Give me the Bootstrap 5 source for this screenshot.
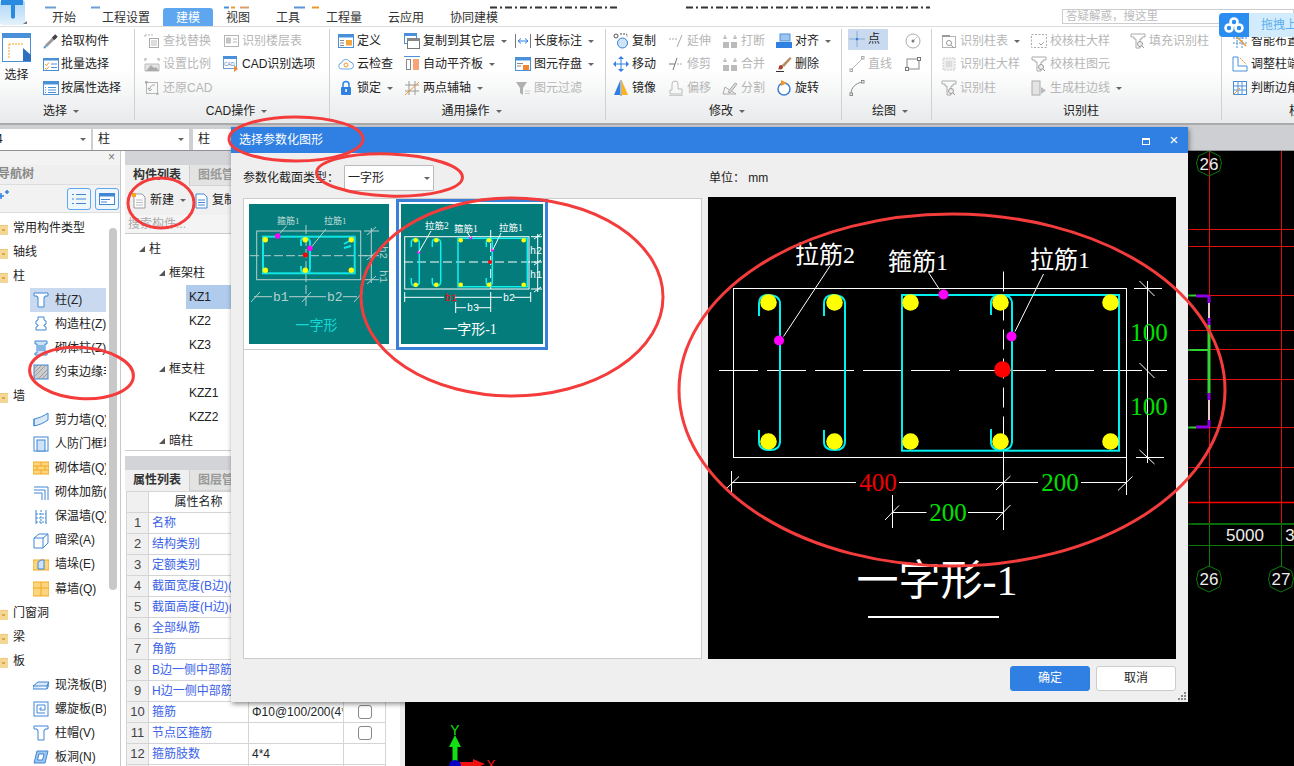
<!DOCTYPE html>
<html lang="zh-CN">
<head>
<meta charset="UTF-8">
<title>选择参数化图形</title>
<link href="https://cdn.jsdelivr.net/npm/bootstrap@5.3.0/dist/css/bootstrap.min.css" rel="stylesheet">
<style>
html, body { margin: 0; width: 1294px; height: 766px; overflow: hidden; background: #fff; }
body { font: 12px/1.2 "Liberation Sans", "Noto Sans CJK SC", sans-serif; color: #222; }
.app-root { position: relative; width: 1294px; height: 766px; overflow: hidden; }

/* header */
.hdr { height: 26px; background: #fff; }
.logo-tile { width: 27px; height: 26px; margin-right: 12px; flex: none; }
.hdr-right { min-width: 0; }
.hdr-marks { height: 4px; }
.tab-row { height: 22px; margin-top: 0; }
.tab-row .nav-link { padding: 4px 13px 0; height: 18px; margin-top: 4px; line-height: 12px; font-size: 12px; color: #333; border-radius: 3px 3px 0 0; }
.tab-row .nav-link.active { background: #5ea6f0; color: #fff; }
.ask-box { position: absolute; left: 1062px; top: 9px; width: 232px; height: 15px; border: 1px solid #ccc; color: #bbb; font-size: 11.5px; line-height: 13px; padding-left: 3px; }
.up-widget { position: absolute; left: 1219px; top: 13px; width: 75px; height: 24px; border-radius: 4px 0 0 4px; background: #d3ecfd; overflow: hidden; color: #5aaeee; line-height: 24px; white-space: nowrap; }
.up-logo { width: 30px; height: 24px; background: #2b8df0; flex: none; margin-right: 12px; }

/* ribbon */
.ribbon { height: 96px; background: linear-gradient(#fff 45%, #e8eaeb); border-top: 1px solid #dcdcdc; border-bottom: 2px solid #a8aaac; box-sizing: content-box; }
.rb-group { position: relative; height: 96px; flex: none; }
.rb-group + .rb-group::before { content: ""; position: absolute; left: 0; top: 2px; bottom: 3px; width: 1px; background: #cfd1d2; }
.rb-body { display: grid; grid-auto-flow: column; grid-template-rows: repeat(3, 23.5px); padding-top: 2px; height: 73px; }
.rb-cap { height: 23px; text-align: center; line-height: 23px; }
.rb-item { display: flex; align-items: center; white-space: nowrap; }
.rb-item.off { color: #b6b6b6; }
.rb-ic { width: 16px; height: 16px; flex: none; margin-right: 3px; }
.dropdown-toggle::after { margin-left: 6px; vertical-align: 2px; color: #666; }
.gp-sel { width: 134px; } .gp-sel .rb-body { grid-template-columns: 43px 1fr; } .gp-sel .rb-cap { padding-right: 12px; }
.gp-sel .rb-ic { margin-right: 2px; }
.rb-big { grid-row: 1 / span 3; display: flex; flex-direction: column; align-items: center; width: 33px; padding-top: 4px; gap: 6px; }
.rb-bigic { width: 29px; height: 29px; }
.gp-cad { width: 195px; padding-left: 10px; } .gp-cad .rb-body { grid-template-columns: 79px 1fr; }
.gp-gen { width: 276px; padding-left: 9px; } .gp-gen .rb-body { grid-template-columns: 66px 111px 1fr; }
.gp-mod { width: 236px; padding-left: 8px; } .gp-mod .rb-body { grid-template-columns: 55px 54px 54px 1fr; }
.gp-drw { width: 90px; padding-left: 8px; } .gp-drw .rb-body { grid-template-columns: 56px 1fr; }
.gp-col { width: 290px; padding-left: 10px; } .gp-col .rb-body { grid-template-columns: 90px 99px 1fr; }
.gp-nxt { width: 73px; padding-left: 11px; overflow: hidden; } .gp-nxt .rb-cap { padding-left: 57px; text-align: left; }
.on-pt { background: #c9daf0; width: 40px; margin: 0 0 3px -1px; padding-left: 1px; }

/* combo bar */
.combo-bar { height: 28px; background: #cdcfd2; border-bottom: 1px solid #8f9194; padding-top: 4px; gap: 2px; }
.combo-cell { height: 21px; background: #fff; padding: 0 5px; line-height: 21px; display: flex; justify-content: space-between; align-items: center; }
.cb-a { width: 91px; overflow: hidden; } .cb-b { width: 96px; margin-right: 2px; } .cb-c { width: 50px; }
.cb-cut { margin-left: -9px; }

/* panels */
.work-row { height: 615px; }
.nav-pane { width: 121px; flex: none; border-right: 1px solid #c9c9c9; overflow: hidden; position: relative; background: #fff; }
.pane-top { height: 14px; background: #f3f3f3; position: relative; }
.close-x { position: absolute; left: 108px; top: 0; color: #777; font-size: 12px; line-height: 13px; }
.nav-title { height: 20px; background: #efefef; color: #888; font-weight: 700; line-height: 19px; border-bottom: 1px solid #ddd; margin-left: -2px; padding-left: 0; }
.nav-tools { height: 28px; background: #f2f2f2; border-bottom: 1px solid #ddd; padding: 3px 1px 0 0; justify-content: space-between; }
.sq-btn { width: 24px; height: 22px; border: 1px solid #5ea6f0; border-radius: 3px; background: #eef6fe; display: flex; align-items: center; justify-content: center; }
.sq-wrap { gap: 4px; }
.tree-box { padding-top: 3px; }
.nt-row { height: 24.05px; display: flex; align-items: center; white-space: nowrap; overflow: hidden; }
.nt-fold { width: 106px; }
.nt-fold svg { margin-left: -8px; margin-right: 5px; width: 16px; height: 14px; flex: none; }
.nt-leaf { margin-left: 30px; width: 76px; }
.nt-leaf svg { width: 16px; height: 16px; margin: 0 6px 0 3px; flex: none; }
.nt-leaf.pick { background: #c9daf0; }
.nav-scroll { position: absolute; left: 109px; top: 77px; width: 8px; height: 362px; background: #c8c8c8; border-radius: 4px; }
.gap-strip { width: 4px; flex: none; background: #fff; }
.gap-strip2 { width: 5px; flex: none; background: #efefef; }
.comp-pane { width: 275px; flex: none; background: #fff; overflow: hidden; }
.grey-strip { height: 14px; background: #d2d4d7; }
.pane-tabs { height: 21px; background: #e3e3e3; border-bottom: 1px solid #d3d3d3; }
.pane-tab { padding: 0 8px; line-height: 20px; height: 21px; }
.pane-tab.now { background: #f0f0f0; font-weight: 700; color: #333; border-right: 1px solid #ccc; width: 65px; }
.pane-tab.idle { color: #999; font-weight: 700; }
.list-tools { height: 29px; background: #f0f0f0; align-items: center; padding-left: 7px; }
.list-tools svg { width: 14px; height: 16px; flex: none; }
.search-in { height: 19px; background: #f4f4f4; color: #aaa; padding-left: 3px; line-height: 18px; border-bottom: 1px solid #ccc; }
.comp-tree { height: 217px; overflow: hidden; padding-top: 3px; border-bottom: 1px solid #ccc; margin-right: 0; }
.ct-row { height: 24px; display: flex; align-items: center; white-space: nowrap; }
.ct-tri { width: 0; height: 0; border-style: solid; border-width: 0 0 6px 6px; border-color: transparent transparent #555; margin-right: 4px; }
.lv1 { padding-left: 14px; } .lv2 { padding-left: 34px; } .lv3 { padding-left: 64px; }
.ct-pick { margin-left: 61px; padding-left: 3px; background: #b0cbeb; }
.gap-v { height: 5px; background: #fff; }
.prop-wrap { width: 259px; margin-left: 1px; }
.prop-table { table-layout: fixed; width: 259px; margin: 0; border-color: #d5d5d5; --bs-table-bg: transparent; }
.c-a { width: 22px; } .c-b { width: 100px; } .c-c { width: 95px; } .c-d { width: 42px; }
.prop-table td, .prop-table th { padding: 0 3px; height: 21px; font-size: 12px; font-weight: 400; line-height: 20px; white-space: nowrap; overflow: hidden; }
.prop-table .idx { background: #f0f0f0; text-align: center; color: #444; padding: 0; font-size: 13px; }
.prop-table .nm { color: #3a62e8; }
.prop-table .ch { text-align: center; padding: 0; }
.prop-table .form-check-input { margin: 3px 0 0; width: 14px; height: 14px; border-color: #888; border-radius: 3px; float: none; }
.cad-view { flex: 1 1 0; background: #000; min-width: 0; }
.cad-view svg { display: block; }

/* dialog */
.param-dlg { position: absolute; left: 231px; top: 127px; width: 957px; height: 575px; background: #efefef; box-shadow: 1px 2px 5px rgba(0, 0, 0, .45); display: flex; flex-direction: column; }
.dlg-head { height: 26px; background: #2f80e2; color: #fff; padding-left: 8px; flex: none; }
.dlg-btn { width: 28px; text-align: center; line-height: 24px; font-size: 15px; }
.dlg-sq { display: inline-block; width: 8px; height: 7px; border: 1px solid #fff; border-top-width: 2px; }
.dlg-type { height: 44px; padding: 6px 12px 0; flex: none; }
.type-left { width: 466px; }
.type-label { margin-right: 8px; width: 93px; white-space: nowrap; }
.type-pick { width: 90px; height: 26px; background: #fff; border: 1px solid #bbb; border-radius: 1px; padding: 0 3px; font-size: 12px; display: flex; align-items: center; justify-content: space-between; }
.dlg-main { height: 462px; padding: 0 12px; flex: none; gap: 6px; }
.thumb-list { width: 459px; flex: none; background: #fff; border: 1px solid #ccc; align-self: stretch; margin-top: 1px; }
.thumb-cell { width: 152px; height: 151px; padding: 5px; border-bottom: 1px solid #ccc; }
.thumb-cell.sel { border: 3px solid #3a7fd8; padding: 2px; }
.thumb-cell svg { display: block; }
.big-view { width: 468px; height: 462px; background: #000; flex: none; }
.big-view svg { display: block; }
.dlg-foot { flex: 1 1 0; padding: 7px 12px 0 0; gap: 6px; position: relative; }
.foot-btn { width: 80px; height: 25px; padding: 0; font-size: 12px; border-radius: 3px; line-height: 23px; }
.btn-ok { background: #2f80e2; color: #fff; border: 1px solid #2f80e2; }
.btn-no { background: #fff; color: #222; border: 1px solid #ccc; }
.grip { position: absolute; right: 2px; bottom: 2px; }

.ink-layer { position: absolute; left: 0; top: 0; pointer-events: none; }
.cjk-serif { font-family: "Liberation Serif", "Noto Sans CJK SC", serif; }
.mono-lbl { font-family: "Liberation Mono", monospace; }
</style>
</head>
<body>
<svg class="d-none">
  <symbol id="ic-pick" viewBox="0 0 16 16"><path d="M3 13 10 6" stroke="#9a9a9a" stroke-width="3"/><path d="M10 6 13.500 2.500" stroke="#444" stroke-width="3.500"/><path d="M1 15 3 13" stroke="#5a93d6" stroke-width="2"/></symbol>
  <symbol id="ic-batch" viewBox="0 0 16 16"><rect x=".5" y="2.500" width="15" height="12" fill="#fff" stroke="#4a90d9"/><rect y="2" width="16" height="2.500" fill="#4a90d9"/><path d="M2 8l1.500 1.500L6 6.500M2 12l1.500 1.500L6 10.500" fill="none" stroke="#f0962e"/><path d="M8 8h6M8 11.500h6" stroke="#4a90d9"/></symbol>
  <symbol id="ic-attr" viewBox="0 0 16 16"><rect x=".5" y="1.500" width="15" height="13" fill="#fff" stroke="#4a90d9"/><rect y="1" width="16" height="3.500" fill="#4a90d9"/><path d="M2 7.500h1M2 10h1M2 12.500h1M5 7.500h8M5 10h8M5 12.500h8" stroke="#4a90d9"/></symbol>
  <symbol id="ic-find" viewBox="0 0 16 16"><path d="M1 2h9M1 2v3" stroke="#b5b5b5" stroke-dasharray="2 1"/><rect x="5.500" y="5.500" width="9" height="9" fill="none" stroke="#aaa"/><path d="M7 8h6M7 10h6M7 12h6" stroke="#bbb"/></symbol>
  <symbol id="ic-layer" viewBox="0 0 16 16"><rect x="1.500" y="2.500" width="14" height="11" fill="none" stroke="#b5b5b5"/><rect x="3" y="4.500" width="5" height="6" fill="#c5c5c5"/><path d="M10 6h4M10 9h4" stroke="#b5b5b5"/></symbol>
  <symbol id="ic-scale" viewBox="0 0 16 16"><path d="M1 2v3M15 2v3M1 3h2M13 3h2" stroke="#aaa"/><path d="M1 15V8h14v7z" fill="#e4e4e4" stroke="#bbb"/><path d="M2 15 7 9l3 3 2-1 3 4z" fill="#aaa"/></symbol>
  <symbol id="ic-cad" viewBox="0 0 16 16"><rect x=".5" y=".5" width="13" height="12" fill="#fff" stroke="#6b9fd8"/><rect width="14" height="3" fill="#4a90d9"/><text x="1" y="9.500" font-size="5" fill="#4a7fc0" font-family="Liberation Sans">CAD</text><path d="M11 9v7l4-3z" fill="#f08a3c"/></symbol>
  <symbol id="ic-restore" viewBox="0 0 16 16"><rect x="2.500" y="2.500" width="11" height="11" fill="none" stroke="#b5b5b5"/><path d="M1 2h3M2 1v3M12 14h3" stroke="#999"/><path d="M11 5A4 4 0 0 0 6 9l-2-1 2 3 2-2" fill="none" stroke="#aaa"/></symbol>
  <symbol id="ic-def" viewBox="0 0 16 16"><rect x=".5" y="1.500" width="15" height="13" fill="#fff" stroke="#4a90d9"/><rect y="1" width="16" height="3.500" fill="#4a90d9"/><path d="M2 7.500h4M2 10h4M2 12.500h4" stroke="#888"/><rect x="8" y="7" width="6" height="5.500" fill="#f5a63c"/></symbol>
  <symbol id="ic-cloud" viewBox="0 0 16 16"><path d="M4 13a3 3 0 0 1-.5-6A4.500 4.500 0 0 1 12 6a3.500 3.500 0 0 1 0 7z" fill="#fff" stroke="#6aa9e6"/><circle cx="8" cy="9" r="2" fill="none" stroke="#f0962e"/></symbol>
  <symbol id="ic-lock" viewBox="0 0 16 16"><path d="M5 7V4.500a3 3 0 0 1 6 0V7" fill="none" stroke="#2f80e2" stroke-width="1.500"/><rect x="3" y="7" width="10" height="8" rx="1" fill="#2f80e2"/><rect x="7.300" y="9" width="1.500" height="3" fill="#fff"/></symbol>
  <symbol id="ic-copyto" viewBox="0 0 16 16"><rect x=".5" y=".5" width="12" height="10" fill="#fff" stroke="#4a90d9"/><rect width="13" height="3" fill="#4a90d9"/><rect x="3.500" y="5.500" width="12" height="10" fill="#fff" stroke="#777"/><rect x="3" y="5" width="13" height="3" fill="#888"/></symbol>
  <symbol id="ic-plate" viewBox="0 0 16 16"><path d="M0 .5h16" stroke="#4a90d9"/><rect x="2.500" y="3.500" width="4" height="10" fill="#fff" stroke="#888"/><rect x="9" y="3" width="6" height="11" fill="#f9a476"/></symbol>
  <symbol id="ic-axis" viewBox="0 0 16 16"><path d="M1 5h14M1 11h14M5 1v14M11 1v14" stroke="#999"/><path d="M1 15 15 2" stroke="#f0962e"/></symbol>
  <symbol id="ic-dim" viewBox="0 0 16 16"><path d="M.5 1v14M15.500 1v14" stroke="#777"/><path d="M3 8h10M3 8l3-2.500M3 8l3 2.500M13 8l-3-2.500M13 8l-3 2.500" fill="none" stroke="#2f80e2"/></symbol>
  <symbol id="ic-save" viewBox="0 0 16 16"><rect x=".5" y="1.500" width="15" height="13" fill="#fff" stroke="#4a90d9"/><rect y="1" width="16" height="3.500" fill="#4a90d9"/><path d="M2 7.500h6M2 10h4" stroke="#888"/><rect x="8" y="9" width="6" height="5" fill="#f2862e"/></symbol>
  <symbol id="ic-filter" viewBox="0 0 16 16"><path d="M1 2h11L8 8v7l-3-2V8z" fill="#b0b0b0"/><path d="M10 11h5M10 13.500h5" stroke="#ccc"/></symbol>
  <symbol id="ic-copy" viewBox="0 0 16 16"><circle cx="9.500" cy="10" r="5" fill="#cfe3f7" stroke="#3a7fd0"/><circle cx="3" cy="3" r="2" fill="none" stroke="#555"/><path d="M7 1h6c1 0 1 1 1 3" fill="none" stroke="#555" stroke-dasharray="2 1"/></symbol>
  <symbol id="ic-move" viewBox="0 0 16 16"><path d="M8 3v10M3 8h10" stroke="#2f80e2"/><path d="M8 0l-3 3h6zM8 16l-3-3h6zM0 8l3-3v6zM16 8l-3-3v6z" fill="#2f80e2"/></symbol>
  <symbol id="ic-mirror" viewBox="0 0 16 16"><path d="M7 1 1 15h6z" fill="#2f80e2"/><path d="M9 1l6 14H9z" fill="#fbb324"/><path d="M8 0v16" stroke="#777"/></symbol>
  <symbol id="ic-ext" viewBox="0 0 16 16"><path d="M1 6h8" stroke="#aaa" stroke-dasharray="2 1"/><path d="M9 14 14 2" stroke="#aaa"/></symbol>
  <symbol id="ic-trim" viewBox="0 0 16 16"><path d="M1 8h6" stroke="#777"/><path d="M9 8h6" stroke="#aaa" stroke-dasharray="2 1"/><path d="M5 14 9 2" stroke="#777"/></symbol>
  <symbol id="ic-offset" viewBox="0 0 16 16"><path d="M2 14V10h2V4a3 3 0 0 1 6 0v5h4v5z" fill="none" stroke="#bbb"/><path d="M1 15.500h14" stroke="#ccc"/></symbol>
  <symbol id="ic-break" viewBox="0 0 16 16"><rect x="1" y="9" width="6" height="6" fill="#bbb"/><rect x="9" y="9" width="6" height="6" fill="#bbb"/><path d="M3 2v4M13 2v4M1 5h4M11 5h4" stroke="#aaa"/></symbol>
  <symbol id="ic-split" viewBox="0 0 16 16"><path d="M1 14h13L3 7z" fill="none" stroke="#aaa"/><path d="M6 12 13 3l2 1-7 9z" fill="#ddd" stroke="#aaa"/></symbol>
  <symbol id="ic-alignto" viewBox="0 0 16 16"><rect x="4" y="1" width="10" height="7" fill="#9cc6ef" stroke="#4a90d9"/><rect y="9" width="16" height="6" fill="#2f80e2"/></symbol>
  <symbol id="ic-del" viewBox="0 0 16 16"><path d="M6 9 14 1l1.500 1.500L8 11z" fill="#b58a5c"/><path d="M3 10c2-2 4-1 4 1s-2 3-5 2c1-1 1-2 1-3z" fill="#a8442a"/><path d="M0 15.500h8" stroke="#333"/></symbol>
  <symbol id="ic-rot" viewBox="0 0 16 16"><circle cx="8" cy="9" r="6" fill="#fff" stroke="#3a7fd0" stroke-width="1.500"/><path d="M5 0l6 3-6 3z" fill="#f0962e"/></symbol>
  <symbol id="ic-pt" viewBox="0 0 16 16"><path d="M0 8h6M10 8h6M8 0v6M8 10v6" stroke="#8fa8c6"/><circle cx="8" cy="8" r="1.500" fill="#2f80e2"/></symbol>
  <symbol id="ic-line" viewBox="0 0 16 16"><path d="M2 14 14 2" stroke="#bbb"/><rect x="1" y="13" width="2.500" height="2.500" fill="none" stroke="#aaa"/><rect x="12.500" y=".5" width="2.500" height="2.500" fill="none" stroke="#aaa"/></symbol>
  <symbol id="ic-arc" viewBox="0 0 16 16"><path d="M2 14C2 8 6 3 14 2" fill="none" stroke="#888"/><rect x="1" y="13" width="2.500" height="2.500" fill="#fff" stroke="#888"/><rect x="12.500" y=".5" width="2.500" height="2.500" fill="#fff" stroke="#888"/></symbol>
  <symbol id="ic-circ" viewBox="0 0 16 16"><circle cx="8" cy="8" r="7" fill="#fff" stroke="#aaa"/><circle cx="8" cy="8" r="1.500" fill="#777"/><path d="M8 8 12 4" stroke="#888" stroke-dasharray="1 1"/></symbol>
  <symbol id="ic-rect" viewBox="0 0 16 16"><rect x="2" y="3" width="12" height="10" fill="#fff" stroke="#888"/><rect x=".5" y="11.500" width="3" height="3" fill="#fff" stroke="#777"/><rect x="12.500" y="1.500" width="3" height="3" fill="#fff" stroke="#777"/></symbol>
  <symbol id="ic-coltb" viewBox="0 0 16 16"><rect x="1.500" y="3.500" width="13" height="11" fill="none" stroke="#b5b5b5"/><path d="M1 3h8" stroke="#999" stroke-width="2"/><circle cx="8" cy="10" r="2.500" fill="none" stroke="#999"/><path d="M10 12l3 3" stroke="#999"/></symbol>
  <symbol id="ic-coldet" viewBox="0 0 16 16"><rect x="2" y="2" width="12" height="12" fill="#eee" stroke="#ccc" stroke-dasharray="2 1"/><rect x="5" y="5" width="6" height="6" fill="#ddd"/></symbol>
  <symbol id="ic-coltee" viewBox="0 0 16 16"><path d="M1 1h14v3h-3v2H10v9H6V6H4V4H1z" fill="none" stroke="#aaa"/><circle cx="10" cy="11" r="2.500" fill="#eee" stroke="#999"/><path d="M12 13l2 2" stroke="#999"/></symbol>
  <symbol id="ic-chkdet" viewBox="0 0 16 16"><rect x=".5" y="1.500" width="15" height="13" fill="none" stroke="#aaa" stroke-dasharray="2 1.500"/><path d="M8 10l2 2 3-3" fill="none" stroke="#aaa"/></symbol>
  <symbol id="ic-gen" viewBox="0 0 16 16"><rect x="1" y="1" width="8" height="14" fill="#e4e4e4" stroke="#aaa"/><path d="M10 7v7l5-3.500z" fill="#bbb"/></symbol>
  <symbol id="ic-smart" viewBox="0 0 16 16"><path d="M1 5h14M1 10h14M5 1v14M10 1v14" stroke="#4a90d9" stroke-dasharray="2 1"/><path d="M4 3 14 13" stroke="#f0962e" stroke-width="1.500"/></symbol>
  <symbol id="ic-adj" viewBox="0 0 16 16"><path d="M1 1h5v9h9v5H1z" fill="#fff" stroke="#4a90d9"/><path d="M8 2l6 6" stroke="#f0962e" stroke-dasharray="2 1"/></symbol>
  <symbol id="ic-grid" viewBox="0 0 16 16"><rect x="1.500" y="1.500" width="13" height="13" fill="#fff" stroke="#4a90d9"/><path d="M6 2v12M10 2v12M2 6h12M2 10h12" stroke="#4a90d9"/><path d="M1 15 8 8" stroke="#f0962e"/></symbol>
  <symbol id="ic-folder" viewBox="0 0 16 14"><path d="M0 2h6l2 2h8v10H0z" fill="#f0c878"/><path d="M0 5h16v9H0z" fill="#f5d795"/><rect x="10" y="8" width="3" height="2" fill="#d8a94a"/></symbol>
  <symbol id="ic-zcol" viewBox="0 0 16 16"><path d="M1 1h14v3h-3v1h-1v10H5V5H4V4H1z" fill="#fff" stroke="#3f86d4"/></symbol>
  <symbol id="ic-gzz" viewBox="0 0 16 16"><path d="M5 1h6v3l2 1v3l-2 1v1l2 1v3H3v-3l2-1V9L3 8V5l2-1z" fill="#fff" stroke="#3f86d4"/></symbol>
  <symbol id="ic-qtz" viewBox="0 0 16 16"><path d="M2 1h12v3h-2v9h2v2H2v-2h2V4H2z" fill="#cfe3f7" stroke="#3f86d4"/><path d="M5 6h6M5 8h6M5 10h6" stroke="#3f86d4"/></symbol>
  <symbol id="ic-edge" viewBox="0 0 16 16"><rect x="1" y="1" width="14" height="14" fill="#ccc" stroke="#3f86d4"/><path d="M1 5 5 1M1 9 9 1M1 13 13 1M5 15 15 5M9 15l6-6" stroke="#888" stroke-width=".7"/></symbol>
  <symbol id="ic-shear" viewBox="0 0 16 16"><path d="M1 7C6 6 11 4 15 1v7C11 11 6 13 1 14z" fill="#d8e8f7" stroke="#3f86d4"/><path d="M1 7v7" stroke="#3f86d4"/></symbol>
  <symbol id="ic-door" viewBox="0 0 16 16"><rect x="1" y="1" width="14" height="14" fill="#fff" stroke="#3f86d4"/><rect x="4" y="4" width="8" height="11" fill="#cfe3f7" stroke="#3f86d4"/></symbol>
  <symbol id="ic-brick" viewBox="0 0 16 16"><rect x="0" y="2" width="16" height="12" fill="#fbd47e" stroke="#f2a91e"/><path d="M0 6h16M0 10h16M8 2v4M4 6v4M12 6v4M8 10v4" stroke="#f2a91e"/></symbol>
  <symbol id="ic-bar" viewBox="0 0 16 16"><path d="M1 2h14v13M1 5h11v10M1 8h8v7" fill="none" stroke="#3f86d4"/></symbol>
  <symbol id="ic-ins" viewBox="0 0 16 16"><path d="M3 1v14M13 1v14" stroke="#3f86d4"/><path d="M8 1v14M3 5h10M3 9h10M3 13h10" stroke="#3f86d4" stroke-dasharray="2 1"/></symbol>
  <symbol id="ic-beam" viewBox="0 0 16 16"><path d="M1 5l5-4h9v9l-5 5H1zM1 5h9v10M10 5l5-4" fill="#fff" stroke="#3f86d4"/></symbol>
  <symbol id="ic-duo" viewBox="0 0 16 16"><rect y="3" width="16" height="10" fill="#fbd47e" stroke="#f2a91e"/><path d="M5 5l3-2h3v9H5z" fill="#cfe3f7" stroke="#3f86d4"/></symbol>
  <symbol id="ic-curt" viewBox="0 0 16 16"><rect y="1" width="16" height="14" fill="#fbd47e" stroke="#f2a91e"/><path d="M8 1v14M0 7h16" stroke="#f2a91e"/></symbol>
  <symbol id="ic-slab" viewBox="0 0 16 16"><path d="M0 9l5-4h11l-2 4zM0 9v3h14V9l2-4v3l-2 4" fill="#d8e8f7" stroke="#3f86d4"/></symbol>
  <symbol id="ic-spiral" viewBox="0 0 16 16"><rect x="1" y="1" width="14" height="14" fill="#fff" stroke="#3f86d4"/><path d="M12 12H4V4h8v5H7V7h2" fill="none" stroke="#3f86d4"/></symbol>
  <symbol id="ic-hole" viewBox="0 0 16 16"><path d="M4 2h11l-3 12H1z" fill="#9cc6ef" stroke="#3f86d4"/><path d="M6 5h5l-1.500 6h-5z" fill="#fff" stroke="#3f86d4"/></symbol>
</svg>

<div class="app-root d-flex flex-column">
  <!-- title + tabs -->
  <div class="hdr d-flex">
    <div class="logo-tile">
      <svg width="27" height="26" viewBox="0 0 27 26">
        <defs><linearGradient id="lg" x1="0" y1="0" x2="0" y2="1"><stop offset="0" stop-color="#a9d4f5"/><stop offset="1" stop-color="#e3f2fc"/></linearGradient></defs>
        <rect width="25" height="25" rx="3" fill="url(#lg)"/>
        <path d="M1 0h22v5h-8v12c0 2-4 2-4 0V5H1z" fill="#2a8ae0"/>
        <path d="M23 24l4 0 0-3z" fill="#777"/>
      </svg>
    </div>
    <div class="hdr-right flex-grow-1">
      <div class="hdr-marks">
        <svg width="1255" height="4" viewBox="39 0 1255 4">
          <path d="M45 1.500h11M91 1.500h9" stroke="#6d9fd6" stroke-width="2"/>
          <path d="M224 1.500h5" stroke="#4a90d9" stroke-width="2"/><path d="M231 1.500h4" stroke="#f0962e" stroke-width="2"/><path d="M240 1.500h9" stroke="#d9a06a" stroke-width="2"/>
          <path d="M294 1.500h11" stroke="#5a93d6" stroke-width="2"/><path d="M312 1.500h7" stroke="#f0962e" stroke-width="2"/>
          <path d="M490 1.500h127M686 1.500h244" stroke="#333" stroke-width="2" stroke-dasharray="7 3 2 3"/>
        </svg>
      </div>
      <ul class="nav tab-row">
        <li class="nav-item"><a class="nav-link" href="#">开始</a></li>
        <li class="nav-item"><a class="nav-link" href="#">工程设置</a></li>
        <li class="nav-item"><a class="nav-link active" href="#">建模</a></li>
        <li class="nav-item"><a class="nav-link" href="#">视图</a></li>
        <li class="nav-item"><a class="nav-link" href="#">工具</a></li>
        <li class="nav-item"><a class="nav-link" href="#">工程量</a></li>
        <li class="nav-item"><a class="nav-link" href="#">云应用</a></li>
        <li class="nav-item"><a class="nav-link" href="#">协同建模</a></li>
      </ul>
    </div>
  </div>
  <div class="ask-box">答疑解惑，搜这里</div>

  <!-- ribbon -->
  <div class="ribbon d-flex">
    <div class="rb-group gp-sel">
      <div class="rb-body">
        <div class="rb-big">
          <svg class="rb-bigic" viewBox="0 0 29 29"><rect x=".5" y=".5" width="28" height="28" fill="#fff" stroke="#4a90d9"/><rect width="29" height="5" fill="#4a90d9"/><path d="M7 11h15M7 11v14" stroke="#f5a623" stroke-dasharray="2 1"/><path d="M21 15v13h8v-6z" fill="#2f6fc0"/></svg>
          <span>选择</span>
        </div>
        <div class="rb-item"><svg class="rb-ic"><use href="#ic-pick"/></svg>拾取构件</div>
        <div class="rb-item"><svg class="rb-ic"><use href="#ic-batch"/></svg>批量选择</div>
        <div class="rb-item"><svg class="rb-ic"><use href="#ic-attr"/></svg>按属性选择</div>
      </div>
      <div class="rb-cap"><span class="dropdown-toggle">选择</span></div>
    </div>
    <div class="rb-group gp-cad">
      <div class="rb-body">
        <div class="rb-item off"><svg class="rb-ic"><use href="#ic-find"/></svg>查找替换</div>
        <div class="rb-item off"><svg class="rb-ic"><use href="#ic-scale"/></svg>设置比例</div>
        <div class="rb-item off"><svg class="rb-ic"><use href="#ic-restore"/></svg>还原CAD</div>
        <div class="rb-item off"><svg class="rb-ic"><use href="#ic-layer"/></svg>识别楼层表</div>
        <div class="rb-item"><svg class="rb-ic"><use href="#ic-cad"/></svg>CAD识别选项</div>
      </div>
      <div class="rb-cap"><span class="dropdown-toggle">CAD操作</span></div>
    </div>
    <div class="rb-group gp-gen">
      <div class="rb-body">
        <div class="rb-item"><svg class="rb-ic"><use href="#ic-def"/></svg>定义</div>
        <div class="rb-item"><svg class="rb-ic"><use href="#ic-cloud"/></svg>云检查</div>
        <div class="rb-item"><svg class="rb-ic"><use href="#ic-lock"/></svg><span class="dropdown-toggle">锁定</span></div>
        <div class="rb-item"><svg class="rb-ic"><use href="#ic-copyto"/></svg><span class="dropdown-toggle">复制到其它层</span></div>
        <div class="rb-item"><svg class="rb-ic"><use href="#ic-plate"/></svg><span class="dropdown-toggle">自动平齐板</span></div>
        <div class="rb-item"><svg class="rb-ic"><use href="#ic-axis"/></svg><span class="dropdown-toggle">两点辅轴</span></div>
        <div class="rb-item"><svg class="rb-ic"><use href="#ic-dim"/></svg><span class="dropdown-toggle">长度标注</span></div>
        <div class="rb-item"><svg class="rb-ic"><use href="#ic-save"/></svg><span class="dropdown-toggle">图元存盘</span></div>
        <div class="rb-item off"><svg class="rb-ic"><use href="#ic-filter"/></svg>图元过滤</div>
      </div>
      <div class="rb-cap"><span class="dropdown-toggle">通用操作</span></div>
    </div>
    <div class="rb-group gp-mod">
      <div class="rb-body">
        <div class="rb-item"><svg class="rb-ic"><use href="#ic-copy"/></svg>复制</div>
        <div class="rb-item"><svg class="rb-ic"><use href="#ic-move"/></svg>移动</div>
        <div class="rb-item"><svg class="rb-ic"><use href="#ic-mirror"/></svg>镜像</div>
        <div class="rb-item off"><svg class="rb-ic"><use href="#ic-ext"/></svg>延伸</div>
        <div class="rb-item off"><svg class="rb-ic"><use href="#ic-trim"/></svg>修剪</div>
        <div class="rb-item off"><svg class="rb-ic"><use href="#ic-offset"/></svg>偏移</div>
        <div class="rb-item off"><svg class="rb-ic"><use href="#ic-break"/></svg>打断</div>
        <div class="rb-item off"><svg class="rb-ic"><use href="#ic-break"/></svg>合并</div>
        <div class="rb-item off"><svg class="rb-ic"><use href="#ic-split"/></svg>分割</div>
        <div class="rb-item"><svg class="rb-ic"><use href="#ic-alignto"/></svg><span class="dropdown-toggle">对齐</span></div>
        <div class="rb-item"><svg class="rb-ic"><use href="#ic-del"/></svg>删除</div>
        <div class="rb-item"><svg class="rb-ic"><use href="#ic-rot"/></svg>旋转</div>
      </div>
      <div class="rb-cap"><span class="dropdown-toggle">修改</span></div>
    </div>
    <div class="rb-group gp-drw">
      <div class="rb-body">
        <div class="rb-item on-pt"><svg class="rb-ic"><use href="#ic-pt"/></svg>点</div>
        <div class="rb-item off"><svg class="rb-ic"><use href="#ic-line"/></svg>直线</div>
        <div class="rb-item"><svg class="rb-ic"><use href="#ic-arc"/></svg></div>
        <div class="rb-item"><svg class="rb-ic"><use href="#ic-circ"/></svg></div>
        <div class="rb-item"><svg class="rb-ic"><use href="#ic-rect"/></svg></div>
      </div>
      <div class="rb-cap"><span class="dropdown-toggle">绘图</span></div>
    </div>
    <div class="rb-group gp-col">
      <div class="rb-body">
        <div class="rb-item off"><svg class="rb-ic"><use href="#ic-coltb"/></svg><span class="dropdown-toggle">识别柱表</span></div>
        <div class="rb-item off"><svg class="rb-ic"><use href="#ic-coldet"/></svg>识别柱大样</div>
        <div class="rb-item off"><svg class="rb-ic"><use href="#ic-coltee"/></svg>识别柱</div>
        <div class="rb-item off"><svg class="rb-ic"><use href="#ic-chkdet"/></svg>校核柱大样</div>
        <div class="rb-item off"><svg class="rb-ic"><use href="#ic-coltee"/></svg>校核柱图元</div>
        <div class="rb-item off"><svg class="rb-ic"><use href="#ic-gen"/></svg><span class="dropdown-toggle">生成柱边线</span></div>
        <div class="rb-item off"><svg class="rb-ic"><use href="#ic-coltee"/></svg>填充识别柱</div>
      </div>
      <div class="rb-cap">识别柱</div>
    </div>
    <div class="rb-group gp-nxt">
      <div class="rb-body">
        <div class="rb-item"><svg class="rb-ic"><use href="#ic-smart"/></svg>智能布置</div>
        <div class="rb-item"><svg class="rb-ic"><use href="#ic-adj"/></svg>调整柱端</div>
        <div class="rb-item"><svg class="rb-ic"><use href="#ic-grid"/></svg>判断边角</div>
      </div>
      <div class="rb-cap">柱</div>
    </div>
  </div>

  <div class="up-widget d-flex">
    <div class="up-logo d-flex align-items-center justify-content-center">
      <svg width="20" height="16" viewBox="0 0 20 16"><g fill="none" stroke="#fff" stroke-width="2.600"><circle cx="10" cy="5" r="3.500"/><circle cx="5" cy="11" r="3.500"/><circle cx="15" cy="11" r="3.500"/></g></svg>
    </div>
    <span>拖拽上传</span>
  </div>

  <!-- combo bar -->
  <div class="combo-bar d-flex">
    <div class="combo-cell cb-a"><span class="cb-cut">4</span><span class="dropdown-toggle"></span></div>
    <div class="combo-cell cb-b"><span>柱</span><span class="dropdown-toggle"></span></div>
    <div class="combo-cell cb-c"><span>柱</span></div>
  </div>

  <!-- work area -->
  <div class="work-row d-flex">
    <div class="nav-pane">
      <div class="pane-top"><span class="close-x">×</span></div>
      <div class="nav-title">导航树</div>
      <div class="nav-tools d-flex">
        <svg width="10" height="14" viewBox="0 0 10 14"><path d="M-2 8h6M1 5v6M5 4h4M7 2v4" stroke="#2f80e2" stroke-width="1.500"/></svg>
        <div class="d-flex sq-wrap">
          <div class="sq-btn"><svg width="14" height="12" viewBox="0 0 14 12"><path d="M0 1.500h2M0 6h2M0 10.500h2M4 1.500h10M4 6h10M4 10.500h10" stroke="#3f86d4" stroke-width="1.200"/></svg></div>
          <div class="sq-btn"><svg width="16" height="12" viewBox="0 0 16 12"><rect x=".5" y=".5" width="15" height="11" fill="#fff" stroke="#3f86d4"/><rect width="16" height="3.500" fill="#3f86d4"/><path d="M2 6.500h9M2 9h6" stroke="#3f86d4"/></svg></div>
        </div>
      </div>
      <div class="tree-box">
        <div class="nt-row nt-fold"><svg><use href="#ic-folder"/></svg>常用构件类型</div>
        <div class="nt-row nt-fold"><svg><use href="#ic-folder"/></svg>轴线</div>
        <div class="nt-row nt-fold"><svg><use href="#ic-folder"/></svg>柱</div>
        <div class="nt-row nt-leaf pick"><svg><use href="#ic-zcol"/></svg>柱(Z)</div>
        <div class="nt-row nt-leaf"><svg><use href="#ic-gzz"/></svg>构造柱(Z)</div>
        <div class="nt-row nt-leaf"><svg><use href="#ic-qtz"/></svg>砌体柱(Z)</div>
        <div class="nt-row nt-leaf"><svg><use href="#ic-edge"/></svg>约束边缘非阴影区</div>
        <div class="nt-row nt-fold"><svg><use href="#ic-folder"/></svg>墙</div>
        <div class="nt-row nt-leaf"><svg><use href="#ic-shear"/></svg>剪力墙(Q)</div>
        <div class="nt-row nt-leaf"><svg><use href="#ic-door"/></svg>人防门框墙</div>
        <div class="nt-row nt-leaf"><svg><use href="#ic-brick"/></svg>砌体墙(Q)</div>
        <div class="nt-row nt-leaf"><svg><use href="#ic-bar"/></svg>砌体加筋(Y)</div>
        <div class="nt-row nt-leaf"><svg><use href="#ic-ins"/></svg>保温墙(Q)</div>
        <div class="nt-row nt-leaf"><svg><use href="#ic-beam"/></svg>暗梁(A)</div>
        <div class="nt-row nt-leaf"><svg><use href="#ic-duo"/></svg>墙垛(E)</div>
        <div class="nt-row nt-leaf"><svg><use href="#ic-curt"/></svg>幕墙(Q)</div>
        <div class="nt-row nt-fold"><svg><use href="#ic-folder"/></svg>门窗洞</div>
        <div class="nt-row nt-fold"><svg><use href="#ic-folder"/></svg>梁</div>
        <div class="nt-row nt-fold"><svg><use href="#ic-folder"/></svg>板</div>
        <div class="nt-row nt-leaf"><svg><use href="#ic-slab"/></svg>现浇板(B)</div>
        <div class="nt-row nt-leaf"><svg><use href="#ic-spiral"/></svg>螺旋板(B)</div>
        <div class="nt-row nt-leaf"><svg><use href="#ic-zcol"/></svg>柱帽(V)</div>
        <div class="nt-row nt-leaf"><svg><use href="#ic-hole"/></svg>板洞(N)</div>
      </div>
      <div class="nav-scroll"></div>
    </div>
    <div class="gap-strip"></div>

    <div class="comp-pane">
      <div class="grey-strip"></div>
      <div class="pane-tabs d-flex">
        <div class="pane-tab now">构件列表</div>
        <div class="pane-tab idle">图纸管理</div>
      </div>
      <div class="list-tools d-flex">
        <svg viewBox="0 0 14 16"><path d="M2 1h8l3 3v11H2z" fill="#fff" stroke="#999"/><path d="M4 7h7M4 9.500h7M4 12h7" stroke="#bbb"/><rect x="0" y="0" width="4" height="4" fill="#f5a623"/></svg>
        <span class="dropdown-toggle ms-1">新建</span>
        <svg class="ms-2" viewBox="0 0 14 16"><path d="M2 1h8l3 3v11H2z" fill="#fff" stroke="#3f86d4"/><path d="M4 7h7M4 9.500h7M4 12h7" stroke="#3f86d4"/></svg>
        <span class="ms-1">复制</span>
      </div>
      <div class="search-in">搜索构件...</div>
      <div class="comp-tree">
        <div class="ct-row lv1"><span class="ct-tri"></span>柱</div>
        <div class="ct-row lv2"><span class="ct-tri"></span>框架柱</div>
        <div class="ct-row ct-pick">KZ1</div>
        <div class="ct-row lv3">KZ2</div>
        <div class="ct-row lv3">KZ3</div>
        <div class="ct-row lv2"><span class="ct-tri"></span>框支柱</div>
        <div class="ct-row lv3">KZZ1</div>
        <div class="ct-row lv3">KZZ2</div>
        <div class="ct-row lv2"><span class="ct-tri"></span>暗柱</div>
      </div>
      <div class="gap-v"></div>
      <div class="grey-strip"></div>
      <div class="pane-tabs d-flex">
        <div class="pane-tab now">属性列表</div>
        <div class="pane-tab idle">图层管理</div>
      </div>
      <div class="prop-wrap">
        <table class="table table-bordered prop-table">
          <colgroup><col class="c-a"><col class="c-b"><col class="c-c"><col class="c-d"></colgroup>
          <thead><tr><th class="idx"></th><th class="text-center">属性名称</th><th></th><th></th></tr></thead>
          <tbody>
            <tr><td class="idx">1</td><td class="nm">名称</td><td></td><td></td></tr>
            <tr><td class="idx">2</td><td class="nm">结构类别</td><td></td><td></td></tr>
            <tr><td class="idx">3</td><td class="nm">定额类别</td><td></td><td></td></tr>
            <tr><td class="idx">4</td><td class="nm">截面宽度(B边)(mm)</td><td></td><td></td></tr>
            <tr><td class="idx">5</td><td class="nm">截面高度(H边)(mm)</td><td></td><td></td></tr>
            <tr><td class="idx">6</td><td class="nm">全部纵筋</td><td></td><td></td></tr>
            <tr><td class="idx">7</td><td class="nm">角筋</td><td></td><td></td></tr>
            <tr><td class="idx">8</td><td class="nm">B边一侧中部筋</td><td></td><td></td></tr>
            <tr><td class="idx">9</td><td class="nm">H边一侧中部筋</td><td></td><td></td></tr>
            <tr><td class="idx">10</td><td class="nm">箍筋</td><td>Φ10@100/200(4*4)</td><td class="ch"><input class="form-check-input" type="checkbox"></td></tr>
            <tr><td class="idx">11</td><td class="nm">节点区箍筋</td><td></td><td class="ch"><input class="form-check-input" type="checkbox"></td></tr>
            <tr><td class="idx">12</td><td class="nm">箍筋肢数</td><td>4*4</td><td></td></tr>
            <tr><td class="idx">13</td><td class="nm"></td><td></td><td></td></tr>
          </tbody>
        </table>
      </div>
    </div>
    <div class="gap-strip2"></div>

    <div class="cad-view">
      <svg width="889" height="615" viewBox="405 151 889 615">
        <g stroke="#e01010" fill="none">
          <path d="M1209.500 151V560M1281.500 151V560"/>
          <path d="M1188 229.500h106M1188 246.500h106M1188 295.500h106M1188 330.500h106M1188 349.500h106M1188 379.500h106M1188 427.500h106M1188 467.500h106"/>
          <path d="M1188 502.500h106" stroke="#ff0000" stroke-width="1.500"/>
        </g>
        <path d="M1188 524h106" stroke="#0b6b0b" stroke-width="2"/>
        <path d="M1188 545.500h106M1209.500 524v43M1281.500 524v43" stroke="#0b7a0b"/>
        <path d="M1188 295.500h8M1188 427.500h8M1188 350h21" stroke="#35d435" stroke-width="2"/>
        <path d="M1196 296h13M1196 427h13M1209 296v7M1209 318v7M1209 393v7M1209 420v7" stroke="#8a00e0" stroke-width="3" fill="none"/>
        <path d="M1209 303v15M1209 400v20" stroke="#e8c8c8" stroke-width="2"/>
        <path d="M1209 325v68" stroke="#35d435" stroke-width="3"/>
        <g fill="none" stroke="#0b7a0b"><path d="M1209 151l10.500 5 2 7-2 8-10.500 5-10.500-5-2-8 2-7z"/><path d="M1209 566l10.500 5 2 8-2 8-10.500 5-10.500-5-2-8 2-8z"/><path d="M1281 566l10.500 5 2 8-2 8-10.500 5-10.500-5-2-8 2-8z"/></g>
        <g fill="#eee" font-family="Liberation Sans, sans-serif" text-anchor="middle">
          <text x="1209" y="170" font-size="17">26</text>
          <text x="1209" y="585" font-size="17">26</text>
          <text x="1281" y="585" font-size="17">27</text>
          <text x="1245" y="541" font-size="17">5000</text>
          <text x="1290" y="541" font-size="17">3</text>
        </g>
        <text x="455" y="735" font-size="14" fill="#12e012" text-anchor="middle" font-family="Liberation Sans, sans-serif">Y</text>
        <path d="M455 762V746" stroke="#12e012" stroke-width="5"/>
        <path d="M455 735l-6 12h12z" fill="#12e012"/>
        <path d="M460 764h14" stroke="#f01010" stroke-width="4"/><path d="M473 759l12 5-12 5z" fill="#f01010"/>
        <text x="491" y="770" font-size="14" fill="#f01010" text-anchor="middle" font-family="Liberation Sans, sans-serif">X</text>
        <circle cx="455" cy="766" r="6" fill="#0000c8"/>
      </svg>
    </div>
  </div>

  <!-- dialog -->
  <div class="param-dlg">
    <div class="dlg-head d-flex align-items-center justify-content-between">
      <span>选择参数化图形</span>
      <div class="d-flex"><span class="dlg-btn"><span class="dlg-sq"></span></span><span class="dlg-btn">×</span></div>
    </div>
    <div class="dlg-type d-flex align-items-center">
      <div class="type-left d-flex align-items-center">
        <span class="type-label">参数化截面类型：</span>
        <span class="type-pick dropdown-toggle">一字形</span>
      </div>
      <span>单位： mm</span>
    </div>
    <div class="dlg-main d-flex">
      <div class="thumb-list d-flex align-items-start">
        <div class="thumb-cell">
          <svg width="140" height="140" viewBox="0 0 140 140">
            <rect width="140" height="140" fill="#047c7c"/>
            <rect x="7.700" y="27" width="104" height="48.700" fill="none" stroke="#b5d0cc"/>
            <path d="M1 51.700h120M57 21v82" stroke="#b5d0cc" stroke-dasharray="9 3"/>
            <rect x="14" y="32.700" width="91.700" height="36.600" fill="none" stroke="#11e6e6" stroke-width="2"/>
            <path d="M52 42V37q0-3 4-3 5 0 5 5v25q0 5-4 5-5 0-5-4v-3M95 40l9-5M95 44l7-2" fill="none" stroke="#11e6e6" stroke-width="2"/>
            <g fill="#ffff00"><circle cx="16.300" cy="35.700" r="2.700"/><circle cx="56.300" cy="35.700" r="2.700"/><circle cx="102.300" cy="35.700" r="2.700"/><circle cx="16.300" cy="66.300" r="2.700"/><circle cx="56.300" cy="66.300" r="2.700"/><circle cx="102.300" cy="66.300" r="2.700"/></g>
            <circle cx="28.700" cy="32" r="2.700" fill="#ff00ff"/><circle cx="61" cy="44.300" r="2.700" fill="#ff00ff"/><circle cx="56.300" cy="51" r="2.500" fill="#f00"/>
            <path d="M31 29.300 37.700 21.700M62.700 42.700 77 25" stroke="#b5d0cc"/>
            <g font-size="9" fill="#c5dcd8" class="cjk-serif"><text x="28" y="20">箍筋1</text><text x="75" y="20">拉筋1</text></g>
            <path d="M122.300 24v55M115 27h15M115 51.700h15M115 75.700h15M118 31l9-8M118 56l9-8M118 80l9-8M5 92.700h18M40 92.700h37M94 92.700h14M2 98l9-10M53 98l9-10M105 98l9-10" stroke="#b5d0cc" fill="none"/>
            <g fill="#b5d0cc" class="mono-lbl"><text x="24" y="97" font-size="13">b1</text><text x="78" y="97" font-size="13">b2</text><text transform="translate(131 42) rotate(90)" font-size="11">h2</text><text transform="translate(131 66) rotate(90)" font-size="11">h1</text></g>
            <text x="67.500" y="126" font-size="14" fill="#14d8d8" text-anchor="middle">一字形</text>
          </svg>
        </div>
        <div class="thumb-cell sel">
          <svg width="142" height="140" viewBox="0 0 142 140">
            <rect width="142" height="140" fill="#047c7c"/>
            <rect x="3.700" y="32.700" width="124.300" height="52.300" fill="none" stroke="#fff"/>
            <path d="M3 58h132M89.700 26v59" stroke="#fff" stroke-dasharray="9 4"/>
            <rect x="57" y="34.300" width="69.300" height="48.400" fill="none" stroke="#11f0f0" stroke-width="1.500"/>
            <path d="M10.300 43V38q0-3 4-3 4 0 4 4v38q0 5-4 5-4 0-4-4v-4M31.300 43V38q0-3 4-3 4.400 0 4.400 4v38q0 5-4.400 5-4 0-4-4v-4M85.300 43V38q0-3 3-3 3 0 3 4v38q0 5-3 5-3 0-3-4v-4" fill="none" stroke="#11f0f0" stroke-width="1.500"/>
            <g fill="#ffff00"><circle cx="14.700" cy="36.300" r="2.300"/><circle cx="35.300" cy="36.300" r="2.300"/><circle cx="59.700" cy="36.300" r="2.300"/><circle cx="88" cy="36.300" r="2.300"/><circle cx="122.700" cy="36.300" r="2.300"/><circle cx="14.700" cy="80.700" r="2.300"/><circle cx="35.300" cy="80.700" r="2.300"/><circle cx="59.700" cy="80.700" r="2.300"/><circle cx="88" cy="80.700" r="2.300"/><circle cx="122.700" cy="80.700" r="2.300"/></g>
            <g fill="#ff00ff"><circle cx="17.700" cy="48.300" r="1.500"/><circle cx="69.700" cy="33.700" r="1.500"/><circle cx="91.700" cy="46" r="1.500"/></g>
            <circle cx="89" cy="58" r="2" fill="#f00"/>
            <path d="M17.700 48.300 30 27M69.700 33.700 66 28M91.700 46 100 29" stroke="#fff" fill="none"/>
            <g font-size="9.500" fill="#fff" class="cjk-serif"><text x="24" y="25">拉筋2</text><text x="53" y="28">箍筋1</text><text x="98" y="27">拉筋1</text></g>
            <path d="M136.700 30v58M130 32.700h11M130 58h11M130 85h11M133 35l7-5M133 61l7-5M133 88l7-5" stroke="#fff" fill="none"/>
            <g class="mono-lbl" font-size="10" fill="#fff"><text x="129" y="50">h2</text><text x="129" y="74">h1</text><text x="102" y="97">b2</text><text x="66" y="107">b3</text></g>
            <text class="mono-lbl" x="44" y="97" font-size="10" fill="#f00">b1</text>
            <path d="M3.700 93.300H43M54 93.300h47M113 93.300h17M3.700 88v10M89.700 88v20M129.700 88v10M54.700 98v11M54.700 103.700H65M77 103.700h12.700" stroke="#fff" fill="none"/>
            <text x="69" y="130" font-size="14" fill="#fff" text-anchor="middle" class="cjk-serif">一字形-1</text>
          </svg>
        </div>
      </div>
      <div class="big-view">
        <svg width="468" height="462" viewBox="708 197 468 462">
          <rect x="733.500" y="288.500" width="393" height="169" fill="none" stroke="#fff"/>
          <path d="M719 370.500h448" stroke="#fff" stroke-dasharray="39 9"/>
          <path d="M1003.500 271.500V458" stroke="#fff" stroke-dasharray="20 9"/>
          <rect x="902" y="295" width="217" height="155.700" fill="none" stroke="#00f0f0" stroke-width="2"/>
          <g fill="none" stroke="#00f0f0" stroke-width="2">
            <path d="M759 316v-12q0-9 9-9 12 0 12 9v137q0 9-10 9-11 0-11-8v-12"/>
            <path d="M824 316v-12q0-9 9-9 12 0 12 9v137q0 9-10 9-11 0-11-8v-12"/>
            <path d="M991 315v-12q0-8 11-8 10 0 10 9v137q0 9-10 9-11 0-11-8v-13"/>
          </g>
          <g fill="#ffff00">
            <circle cx="768.500" cy="302.500" r="8.300"/><circle cx="834.500" cy="302.500" r="8.300"/><circle cx="910.500" cy="302.500" r="8.300"/><circle cx="1000.500" cy="302.500" r="8.300"/><circle cx="1110.500" cy="302.500" r="8.300"/>
            <circle cx="768.500" cy="441.500" r="8.300"/><circle cx="834.500" cy="441.500" r="8.300"/><circle cx="910.500" cy="441.500" r="8.300"/><circle cx="1000.500" cy="441.500" r="8.300"/><circle cx="1110.500" cy="441.500" r="8.300"/>
          </g>
          <g fill="#ff00ff"><circle cx="779" cy="340.500" r="5"/><circle cx="943.500" cy="294.500" r="5"/><circle cx="1011.500" cy="336.500" r="5"/></g>
          <circle cx="1002.500" cy="369.500" r="8.300" fill="#f00"/>
          <path d="M783.500 336.500 830 266M939.500 289.500 928.500 272.500M1015 331.500 1043.500 274" stroke="#fff"/>
          <g class="cjk-serif" font-size="24" fill="#fff">
            <text x="795" y="263">拉筋2</text><text x="888" y="270">箍筋1</text><text x="1030" y="268">拉筋1</text>
          </g>
          <path d="M1147.500 281V463M1134 288.500h28M1136 457.500h28M1139.500 281l15 15M1139.500 363l15 15M1139.500 450l15 14" stroke="#fff" fill="none"/>
          <g class="cjk-serif" font-size="25" fill="#00e000" text-anchor="middle"><text x="1149" y="341">100</text><text x="1149" y="415">100</text><text x="1060" y="491">200</text></g>
          <text class="cjk-serif" x="878" y="491" font-size="25" fill="#f00000" text-anchor="middle">400</text>
          <text class="cjk-serif" x="948" y="521" font-size="25" fill="#00e000" text-anchor="middle">200</text>
          <path d="M731.500 471v24M1003.500 458v72M1126.500 458v37M892.500 495v33M731 482.500h125M899 482.500h139M1081 482.500h45.500M892.500 512.500h34M968 512.500h35.500M725 490l14-13.500M996 490l14.500-14M1118 490.500l14.500-14M885 520l14-14.500M996 520l14.500-15" stroke="#fff" fill="none"/>
          <text class="cjk-serif" x="937" y="595" font-size="42" fill="#fff" text-anchor="middle">一字形-1</text>
          <path d="M868 617h131" stroke="#fff" stroke-width="2"/>
        </svg>
      </div>
    </div>
    <div class="dlg-foot d-flex justify-content-end">
      <button type="button" class="btn foot-btn btn-ok">确定</button>
      <button type="button" class="btn foot-btn btn-no">取消</button>
      <svg class="grip" width="9" height="9" viewBox="0 0 9 9"><path d="M7 1h2v2H7zM4 4h2v2H4zM7 4h2v2H7zM1 7h2v2H1zM4 7h2v2H4zM7 7h2v2H7z" fill="#888"/></svg>
    </div>
  </div>

  <!-- hand-drawn red marks on the screenshot -->
  <svg class="ink-layer" width="1294" height="766" viewBox="0 0 1294 766" fill="none" stroke="#f43c3c" stroke-width="3">
    <ellipse cx="296" cy="139" rx="67" ry="22"/>
    <ellipse cx="389.500" cy="175" rx="73" ry="21" transform="rotate(2 389.500 175)"/>
    <ellipse cx="512" cy="297" rx="151" ry="99"/>
    <ellipse cx="952" cy="390" rx="273" ry="176"/>
    <ellipse cx="161" cy="203" rx="33" ry="25"/>
    <ellipse cx="81.500" cy="373" rx="52" ry="25.500" transform="rotate(4 81.500 373)"/>
  </svg>
</div>
<script src="https://cdn.jsdelivr.net/npm/bootstrap@5.3.0/dist/js/bootstrap.bundle.min.js"></script>
</body>
</html>
